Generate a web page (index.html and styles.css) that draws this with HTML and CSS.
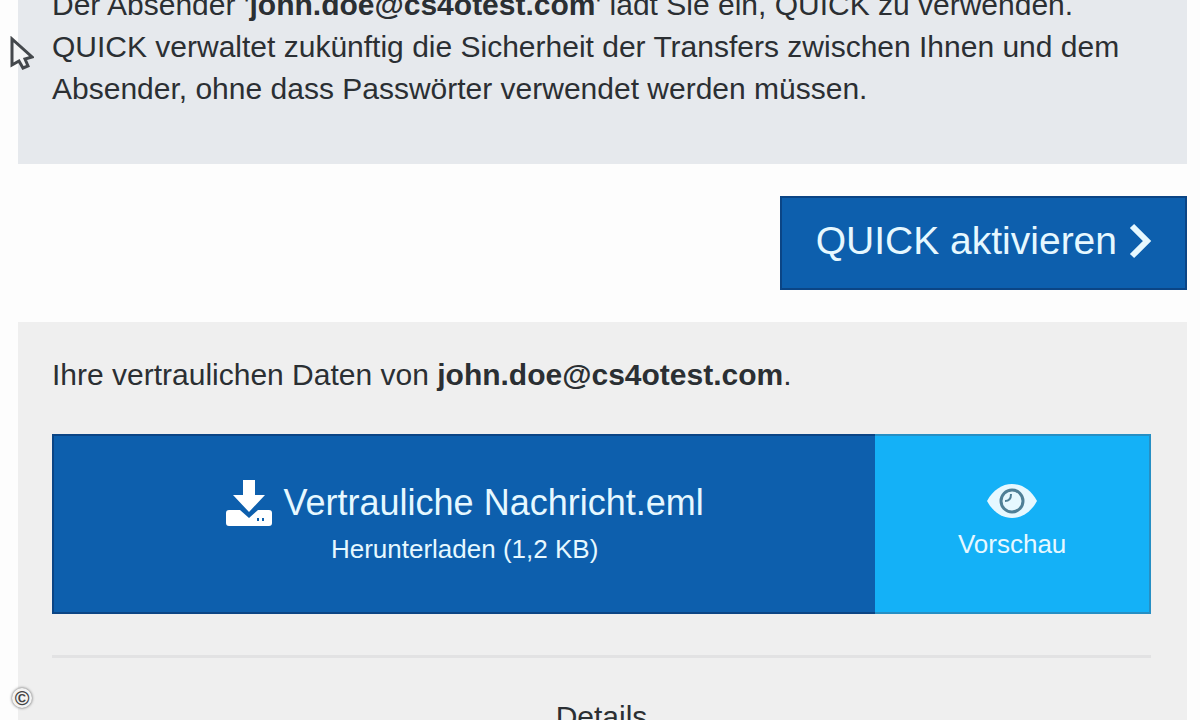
FILE: index.html
```html
<!DOCTYPE html>
<html lang="de">
<head>
    <meta charset="UTF-8">
    <meta name="viewport" content="width=device-width, initial-scale=1.0">
    <title>Vertrauliche Nachricht</title>
    <link rel="stylesheet" href="styles.css">
</head>
<body>
    <main>
        <section class="invite">
            <p>Der Absender '<strong>john.doe@cs4otest.com</strong>' lädt Sie ein, QUICK zu verwenden. QUICK verwaltet zukünftig die Sicherheit der Transfers zwischen Ihnen und dem Absender, ohne dass Passwörter verwendet werden müssen.</p>
        </section>

        <div class="actions">
            <button class="activate" type="button">
                QUICK aktivieren
                <svg class="chevron" viewBox="0 0 24 36" aria-hidden="true">
                    <path d="M3 3l15 15L3 33"/>
                </svg>
            </button>
        </div>

        <section class="data">
            <p>Ihre vertraulichen Daten von <strong>john.doe@cs4otest.com</strong>.</p>
            <div class="files">
                <button class="download" type="button">
                    <span class="file-name">
                        <svg class="icon-download" viewBox="0 0 46 46" aria-hidden="true">
                            <path d="M17 0h12v15h10L23 32 7 15h10z"/>
                            <path fill-rule="evenodd" d="M3 30h11l9 8 9-8h11q3 0 3 3v10q0 3-3 3H3q-3 0-3-3V33q0-3 3-3zM31 38v3h2v-3zM36 38v3h2v-3z"/>
                        </svg>
                        Vertrauliche Nachricht.eml
                    </span>
                    <span class="label">Herunterladen (1,2 KB)</span>
                </button>
                <button class="preview" type="button">
                    <svg class="icon-eye" viewBox="0 0 52 36" aria-hidden="true">
                        <path class="eye" d="M1 18C7 7 16 1 26 1s19 6 25 17C45 29 36 35 26 35S7 29 1 18z"/>
                        <circle class="iris" cx="26" cy="18" r="11"/>
                        <path class="glint" d="M19 18q6 0 6-7"/>
                    </svg>
                    <span class="label">Vorschau</span>
                </button>
            </div>
            <hr>
            <h2>Details</h2>
        </section>
    </main>

    <svg class="cursor" viewBox="0 0 24 36" aria-hidden="true">
        <path d="M2 3v26l7-4 4 7 5-2-3-7 7-2z"/>
    </svg>
    <span class="copyright">©</span>
</body>
</html>
```

FILE: styles.css
```css
html, body {
    height: 100%;
    overflow: hidden;
}
body {
    position: relative;
    margin: 0;
    background-color: #fdfdfd;
    color: #2b2f33;
    font-family: "Liberation Sans", Arial, sans-serif;
    font-size: 30px;
    line-height: 42px;
}
main {
    margin: -16px 13px 0 18px;
}
p {
    margin: 0;
}
button {
    border: none;
    color: #e6f8ff;
    font-family: inherit;
    cursor: pointer;
}
.invite {
    padding: 0 34px 54px;
    background-color: #e6e9ed;
}
.actions {
    display: flex;
    justify-content: flex-end;
    padding: 32px 0;
}
.activate {
    display: flex;
    align-items: center;
    gap: 12px;
    padding: 22px 32px 26px 34px;
    border: 2px solid #0b4585;
    background-color: #0d5fad;
    font-size: 39px;
    line-height: 42px;
}
.chevron {
    width: 24px;
    height: 36px;
    fill: none;
    stroke: #e6f8ff;
    stroke-width: 6;
}
.data {
    padding: 32px 36px 34px 34px;
    background-color: #efefef;
}
.files {
    display: flex;
    margin-top: 38px;
}
.download, .preview {
    display: flex;
    flex-direction: column;
    align-items: center;
    justify-content: center;
    min-height: 180px;
    padding: 0;
}
.download {
    flex: 3;
    border: solid #0b4585;
    border-width: 2px 0 2px 2px;
    background-color: #0d5fad;
}
.preview {
    flex: 1;
    gap: 4px;
    border: solid #268fc4;
    border-width: 2px 2px 2px 0;
    background-color: #14b1f7;
}
.file-name {
    display: flex;
    align-items: center;
    gap: 12px;
    font-size: 36px;
    line-height: 50px;
}
.label {
    font-size: 26px;
    line-height: 42px;
}
.icon-download {
    width: 46px;
    height: 46px;
    fill: #fff;
}
.icon-eye {
    width: 52px;
    height: 36px;
}
.eye {
    fill: #e6f8ff;
}
.iris {
    fill: none;
    stroke: #4f7f96;
    stroke-width: 3;
}
.glint {
    fill: none;
    stroke: #4f7f96;
    stroke-width: 2;
}
hr {
    height: 3px;
    margin: 41px 0 38px;
    border: none;
    background-color: #e2e2e3;
}
h2 {
    margin: 0;
    font-size: 30px;
    font-weight: normal;
    text-align: center;
}
.cursor {
    position: absolute;
    top: 36px;
    left: 10px;
    width: 24px;
    height: 36px;
    fill: #f4f5f6;
    stroke: #44484c;
    stroke-width: 3;
}
.copyright {
    position: absolute;
    left: 12px;
    bottom: 12px;
    width: 20px;
    border-radius: 50%;
    background-color: #f4f4f4;
    box-shadow: 0 0 3px #555;
    color: #444;
    font-size: 20px;
    font-weight: bold;
    line-height: 20px;
    text-align: center;
}
```
